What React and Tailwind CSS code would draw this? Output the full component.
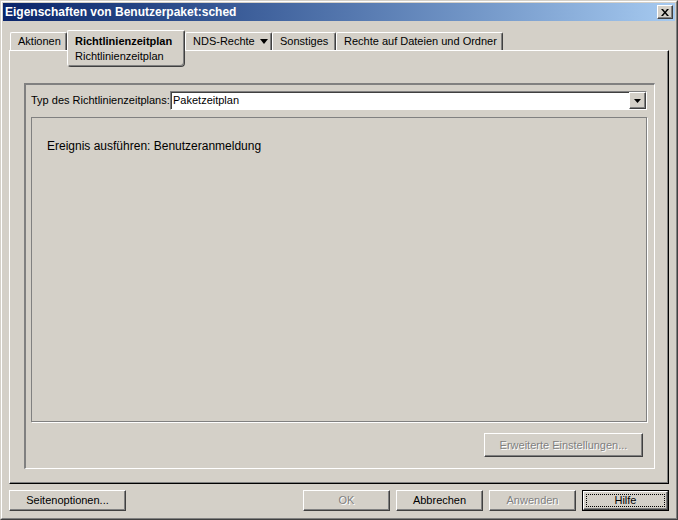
import React from "react";

const font = { fontFamily: '"Liberation Sans", Arial, sans-serif' };

/* raised 3D button */
function Button({ children, disabled, focused, width = "w-[87px]" }) {
  const face = (
    <div className="h-full w-full border border-t-white border-l-white border-r-[#404040] border-b-[#404040] shadow-[inset_-1px_-1px_0_#808080] flex items-center justify-center">
      <span
        className={
          disabled
            ? "text-[#808080] [text-shadow:1px_1px_0_#fff]"
            : "text-black"
        }
      >
        {children}
      </span>
    </div>
  );

  if (focused) {
    return (
      <div className={`${width} h-[21px] border border-black bg-[#d4d0c8] text-[11px]`}>
        <div className="relative h-full w-full">
          {face}
          <div className="absolute inset-[3px] border border-dotted border-black pointer-events-none" />
        </div>
      </div>
    );
  }

  return <div className={`${width} h-[21px] bg-[#d4d0c8] text-[11px]`}>{face}</div>;
}

function Tab({ children, width }) {
  return (
    <div
      className={`${width} h-[18px] border-l border-t border-white border-r border-r-[#404040] shadow-[inset_-1px_0_0_#808080] rounded-t-[2px] flex items-center pl-[7px] text-[11px] whitespace-nowrap`}
    >
      {children}
    </div>
  );
}

export default function App() {
  return (
    <div className="w-[678px] h-[520px] bg-[#d4d0c8] text-black" style={font}>
      {/* window frame */}
      <div className="h-full w-full border border-t-[#d4d0c8] border-l-[#d4d0c8] border-r-[#404040] border-b-[#404040]">
        <div className="h-full w-full border border-t-white border-l-white border-r-[#808080] border-b-[#808080] p-px flex flex-col">
          {/* Title bar */}
          <div className="h-[18px] bg-gradient-to-r from-[#0a246a] to-[#a6caf0] flex items-center justify-between pl-[2px] pr-[2px]">
            <span className="text-white font-bold text-[12px] leading-none">
              Eigenschaften von Benutzerpaket:sched
            </span>
            <div className="w-[16px] h-[14px] bg-[#d4d0c8] border border-t-white border-l-white border-r-[#404040] border-b-[#404040] shadow-[inset_-1px_-1px_0_#808080] flex items-center justify-center">
              <svg width="8" height="7" viewBox="0 0 8 7">
                <path d="M0 0h2l2 2.5L6 0h2L5 3.5 8 7H6L4 4.5 2 7H0l3-3.5z" fill="black" />
              </svg>
            </div>
          </div>

          <div className="flex-1 flex flex-col px-[6px] pt-[9px] pb-[6px]">
            {/* Tabs */}
            <div className="h-[20px] flex items-end pl-px">
              <Tab width="w-[57px]">Aktionen</Tab>
              <div className="relative z-10 w-[118px] h-[37px] mb-[-17px] bg-[#d4d0c8] border border-t-white border-l-white border-r-[#404040] border-b-[#404040] shadow-[inset_-1px_-1px_0_#808080] rounded-t-[2px] rounded-b-[4px] pl-[7px] pt-[3px] text-[11px] leading-[15px]">
                <div className="font-bold">Richtlinienzeitplan</div>
                <div>Richtlinienzeitplan</div>
              </div>
              <Tab width="w-[87px]">
                <span>NDS-Rechte</span>
                <svg className="ml-[5px] shrink-0" width="8" height="5" viewBox="0 0 8 5">
                  <path d="M0 0h8L4 5z" fill="black" />
                </svg>
              </Tab>
              <Tab width="w-[64px]">Sonstiges</Tab>
              <Tab width="w-[167px]">Rechte auf Dateien und Ordner</Tab>
            </div>

            {/* Tab panel */}
            <div className="h-[434px] border border-t-white border-l-white border-r-black border-b-black shadow-[inset_-1px_-1px_0_#808080] pt-[32px] pl-[14px] pr-[13px] pb-[14px]">
              {/* Group box */}
              <div className="h-full border-t-2 border-l-2 border-t-[#808080] border-l-[#808080] border-r border-b border-r-white border-b-white pt-[6px] pl-[5px] pr-[7px] pb-[11px] flex flex-col">
                <div className="h-[19px] flex items-center text-[11px]">
                  <span className="w-[139px] shrink-0 whitespace-nowrap">Typ des Richtlinienzeitplans:</span>
                  <div className="flex-1 h-[19px] bg-white border border-t-[#808080] border-l-[#808080] border-r-white border-b-white shadow-[inset_1px_1px_0_#404040] flex items-center">
                    <span className="flex-1 pl-[2px]">Paketzeitplan</span>
                    <div className="w-[17px] h-[17px] bg-[#d4d0c8] border border-t-white border-l-white border-r-[#404040] border-b-[#404040] shadow-[inset_-1px_-1px_0_#808080] flex items-center justify-center">
                      <svg width="7" height="4" viewBox="0 0 7 4">
                        <path d="M0 0h7L3.5 4z" fill="black" />
                      </svg>
                    </div>
                  </div>
                </div>

                <div className="mt-[7px] h-[305px] border border-[#808080] shadow-[1px_1px_0_#fff] pl-[15px] pt-[19px] text-[12px]">
                  Ereignis ausführen: Benutzeranmeldung
                </div>

                <div className="mt-[11px] flex justify-end pr-[4px]">
                  <div className="w-[159px] h-[24px] text-[11px] border border-t-white border-l-white border-r-[#404040] border-b-[#404040] shadow-[inset_-1px_-1px_0_#808080] flex items-center justify-center">
                    <span className="text-[#808080] [text-shadow:1px_1px_0_#fff]">
                      Erweiterte Einstellungen...
                    </span>
                  </div>
                </div>
              </div>
            </div>

            {/* Bottom buttons */}
            <div className="mt-[6px] flex justify-between">
              <Button width="w-[117px]">Seitenoptionen...</Button>
              <div className="flex gap-[6px]">
                <Button disabled>OK</Button>
                <Button>Abbrechen</Button>
                <Button disabled>Anwenden</Button>
                <Button focused>Hilfe</Button>
              </div>
            </div>
          </div>
        </div>
      </div>
    </div>
  );
}
